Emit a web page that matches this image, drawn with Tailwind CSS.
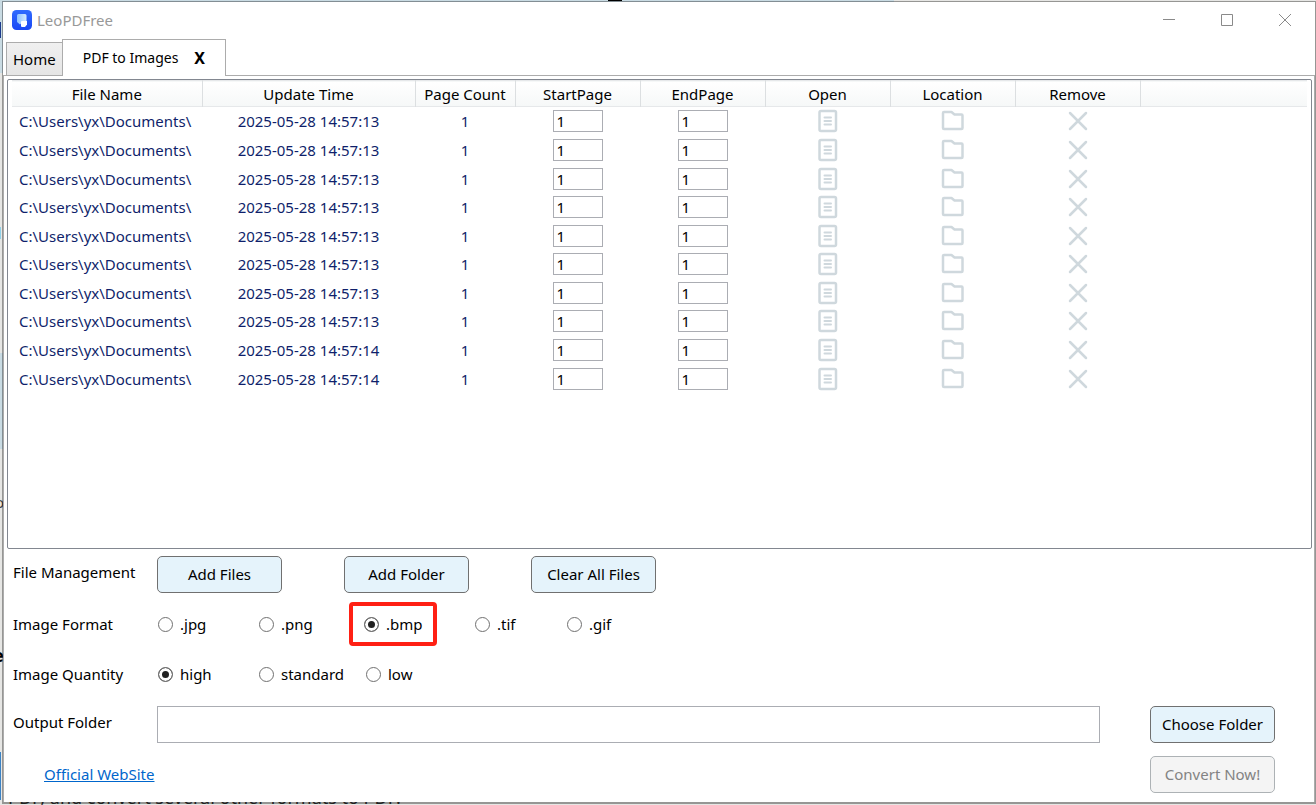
<!DOCTYPE html>
<html lang="en">
<head>
  <meta charset="UTF-8" />
  <meta name="viewport" content="width=device-width, initial-scale=1.0" />
  <title>LeoPDFree</title>
  <script src="https://cdn.jsdelivr.net/npm/@tailwindcss/browser@4"></script>
</head>
<body class="relative h-screen overflow-hidden bg-[#e6e6e4] font-['Noto_Sans','Open_Sans',sans-serif] text-[15px] leading-5 text-black">

  <!-- Page behind the window -->
  <div aria-hidden="true">
    <div class="absolute top-0 left-0 h-[73px] w-[894px] bg-[#c9dbe3]"></div>
    <div class="absolute top-[353px] left-0 h-[96px] w-2 bg-[#c9dbe3]"></div>
    <div class="absolute top-[22px] left-0 h-4 w-px bg-[#1b3a8c]"></div>
    <div class="absolute top-[227px] left-0 h-3 w-px bg-[#8fd0e8]"></div>
    <div class="absolute top-[752px] left-0 h-12 w-px bg-[#3b82c4]"></div>
    <div class="absolute top-0 left-[608px] h-px w-[14px] bg-black"></div>
    <div class="absolute top-[492px] -left-[5px] text-[#444]">o</div>
    <div class="absolute top-[641px] -left-[7px] text-lg font-bold">e</div>
    <div class="absolute top-[787px] left-0 pl-2 text-lg leading-5 text-[#333]">PDF, and convert several other formats to PDF.</div>
  </div>

  <!-- Window -->
  <main class="absolute top-px right-0 bottom-px left-[2px] flex flex-col border border-b-2 border-black/35 bg-white bg-clip-padding">

    <!-- Title bar -->
    <header class="flex h-[37px] shrink-0 items-center pb-px pl-[9px]">
      <svg class="size-5" viewBox="0 0 20 20">
        <defs>
          <linearGradient id="logoBg" x1="0" y1="0" x2="0" y2="1">
            <stop offset="0" stop-color="#2f6bff" />
            <stop offset="1" stop-color="#1a48f5" />
          </linearGradient>
          <linearGradient id="logoPage" x1="0" y1="0" x2="1" y2="0">
            <stop offset="0" stop-color="#8cc2ff" />
            <stop offset="1" stop-color="#d6eaff" />
          </linearGradient>
        </defs>
        <rect width="20" height="20" rx="4.5" fill="url(#logoBg)" />
        <path d="M6.500 4H13a1.500 1.500 0 0 1 1.500 1.500V13H9.500L8 14.500 5 12V5.500A1.500 1.500 0 0 1 6.500 4z" fill="url(#logoPage)" />
        <path d="M10 11h5V14.500L13 17h-3a1 1 0 0 1-1-1v-4a1 1 0 0 1 1-1z" fill="#fff" />
      </svg>
      <h1 class="ml-[5px] text-[#999]">LeoPDFree</h1>
      <div class="ml-auto flex pr-px text-[#8a8a8a]">
        <button aria-label="Minimize" class="flex h-8 w-[58px] items-center justify-center"><svg class="size-3" viewBox="0 0 12 12" stroke="currentColor"><path d="M0 5.500h12" /></svg></button>
        <button aria-label="Maximize" class="flex h-8 w-[58px] items-center justify-center"><svg class="size-3" viewBox="0 0 12 12" fill="none" stroke="currentColor"><path d="M.5.5h11v11H.5z" /></svg></button>
        <button aria-label="Close" class="flex h-8 w-[58px] items-center justify-center"><svg class="size-3" viewBox="0 0 12 12" stroke="currentColor"><path d="M0 0l12 12M12 0L0 12" /></svg></button>
      </div>
    </header>

    <!-- Tabs -->
    <nav class="flex shrink-0 items-end pl-[3px]">
      <button class="h-[33px] border border-r-0 border-b-0 border-[#acacac] bg-linear-to-b from-[#f0f0f0] to-[#e5e5e5] px-[6px] pb-px">Home</button>
      <div class="relative z-10 -mb-px flex h-[37px] w-[164px] items-center border border-b-0 border-[#acacac] bg-white pl-5">
        <button class="text-[14px]">PDF to Images</button>
        <button aria-label="Close tab" class="ml-4 text-base font-bold">X</button>
      </div>
    </nav>

    <!-- Tab content -->
    <section class="flex min-h-0 flex-1 flex-col border border-b-0 border-[#acacac] pb-[3px]">
      <div class="mt-[3px] mr-[2px] ml-[3px] min-h-0 flex-1 overflow-hidden rounded-xs border border-[#828790] px-1">
        <table class="h-[313px] w-full table-fixed border-collapse text-center">
          <colgroup>
            <col class="w-[190px]" />
            <col class="w-[213px]" />
            <col class="w-[100px]" />
            <col class="w-[125px]" />
            <col class="w-[125px]" />
            <col class="w-[125px]" />
            <col class="w-[125px]" />
            <col class="w-[125px]" />
            <col />
          </colgroup>
          <thead>
            <tr class="h-[26px] border-y border-[#e6e8ea] bg-linear-to-b from-white to-[#f6f8f8] *:border-r *:border-[#dcdfe1] *:p-0 *:font-normal *:last:border-r-0">
              <th>File Name</th>
              <th>Update Time</th>
              <th>Page Count</th>
              <th>StartPage</th>
              <th>EndPage</th>
              <th>Open</th>
              <th>Location</th>
              <th>Remove</th>
              <td></td>
            </tr>
          </thead>
          <tbody id="fileRows" class="text-[#0f1f6b]"></tbody>
        </table>
      </div>

      <form class="shrink-0 pr-[39px] pl-[9px]" onsubmit="return false">
        <!-- File management -->
        <div class="flex h-[50px] items-center">
          <span class="w-36 pb-1">File Management</span>
          <div class="flex gap-[62px]">
            <button type="button" class="h-[37px] w-[125px] rounded-[5px] border border-[#707070] bg-[#e5f3fb]">Add Files</button>
            <button type="button" class="h-[37px] w-[125px] rounded-[5px] border border-[#707070] bg-[#e5f3fb]">Add Folder</button>
            <button type="button" class="h-[37px] w-[125px] rounded-[5px] border border-[#707070] bg-[#e5f3fb]">Clear All Files</button>
          </div>
        </div>

        <!-- Image format -->
        <div role="radiogroup" aria-label="Image Format" class="flex h-[50px] items-center">
          <span class="w-[145px]">Image Format</span>
          <label class="flex w-[101px] items-center gap-[7px]"><input type="radio" name="format" class="size-[15px] appearance-none rounded-full border border-[#707070] checked:bg-[#212121] checked:shadow-[inset_0_0_0_3px_white]" />.jpg</label>
          <label class="flex w-[90px] items-center gap-[7px]"><input type="radio" name="format" class="size-[15px] appearance-none rounded-full border border-[#707070] checked:bg-[#212121] checked:shadow-[inset_0_0_0_3px_white]" />.png</label>
          <label class="flex h-11 w-[88px] items-center gap-[7px] rounded-sm border-4 border-[#ff2014] pl-[11px]"><input type="radio" name="format" checked class="size-[15px] shrink-0 appearance-none rounded-full border border-[#707070] checked:bg-[#212121] checked:shadow-[inset_0_0_0_3px_white]" />.bmp</label>
          <label class="ml-[38px] flex w-[92px] items-center gap-[7px]"><input type="radio" name="format" class="size-[15px] appearance-none rounded-full border border-[#707070] checked:bg-[#212121] checked:shadow-[inset_0_0_0_3px_white]" />.tif</label>
          <label class="flex items-center gap-[7px]"><input type="radio" name="format" class="size-[15px] appearance-none rounded-full border border-[#707070] checked:bg-[#212121] checked:shadow-[inset_0_0_0_3px_white]" />.gif</label>
        </div>

        <!-- Image quality -->
        <div role="radiogroup" aria-label="Image Quantity" class="flex h-[50px] items-center">
          <span class="w-[145px]">Image Quantity</span>
          <label class="flex w-[101px] items-center gap-[7px]"><input type="radio" name="quality" checked class="size-[15px] appearance-none rounded-full border border-[#707070] checked:bg-[#212121] checked:shadow-[inset_0_0_0_3px_white]" />high</label>
          <label class="flex w-[107px] items-center gap-[7px]"><input type="radio" name="quality" class="size-[15px] appearance-none rounded-full border border-[#707070] checked:bg-[#212121] checked:shadow-[inset_0_0_0_3px_white]" />standard</label>
          <label class="flex items-center gap-[7px]"><input type="radio" name="quality" class="size-[15px] appearance-none rounded-full border border-[#707070] checked:bg-[#212121] checked:shadow-[inset_0_0_0_3px_white]" />low</label>
        </div>

        <!-- Output folder -->
        <div class="flex h-[50px] items-center">
          <label for="output" class="w-36 pb-1">Output Folder</label>
          <input id="output" type="text" class="h-[37px] min-w-0 flex-1 border border-[#abadb3] px-2" />
          <button type="button" class="ml-[50px] h-[37px] w-[125px] rounded-[5px] border border-[#707070] bg-[#e5f3fb]">Choose Folder</button>
        </div>

        <div class="flex h-[50px] items-center justify-between pl-[31px]">
          <a href="#" class="text-[#0066cc] underline">Official WebSite</a>
          <button type="submit" disabled class="h-[37px] w-[125px] rounded-[5px] border border-[#adb2b5] bg-[#f4f4f4] text-[#838383]">Convert Now!</button>
        </div>
      </form>
    </section>
  </main>

  <script>
    const times = [
      '2025-05-28 14:57:13', '2025-05-28 14:57:13', '2025-05-28 14:57:13', '2025-05-28 14:57:13',
      '2025-05-28 14:57:13', '2025-05-28 14:57:13', '2025-05-28 14:57:13', '2025-05-28 14:57:13',
      '2025-05-28 14:57:14', '2025-05-28 14:57:14'
    ];

    const pageInput = (label) => `<input type="text" value="1" aria-label="${label}" class="mx-auto block h-[22px] w-[50px] border border-[#abadb3] bg-white px-[3px] text-black" />`;

    const iconButton = (label, shapes) => `
      <button aria-label="${label}" class="mx-auto block"><svg class="size-6" viewBox="0 0 24 24" fill="none" stroke="#cfd8dd" stroke-width="2.5" stroke-linecap="round" stroke-linejoin="round">${shapes}</svg></button>`;

    document.getElementById('fileRows').innerHTML = times.map((time) => `
      <tr class="*:p-0">
        <td class="text-left"><span class="pl-[7px]">C:\\Users\\yx\\Documents\\</span></td>
        <td>${time}</td>
        <td>1</td>
        <td>${pageInput('Start page')}</td>
        <td>${pageInput('End page')}</td>
        <td>${iconButton('Open', '<rect x="3.500" y="2" width="16.500" height="20" rx="1.500" /><path d="M8.500 8.500h6.500M8.500 12h6.500M8.500 15.500h6.500" stroke-width="2" />')}</td>
        <td>${iconButton('Location', '<path d="M2 4a1 1 0 0 1 1-1h7.500l3 2.500H20.500a1 1 0 0 1 1 1V19a1 1 0 0 1-1 1H3a1 1 0 0 1-1-1z" />')}</td>
        <td>${iconButton('Remove', '<path d="M4 4l16 16M20 4L4 20" />')}</td>
        <td></td>
      </tr>`).join('');
  </script>

</body>
</html>
